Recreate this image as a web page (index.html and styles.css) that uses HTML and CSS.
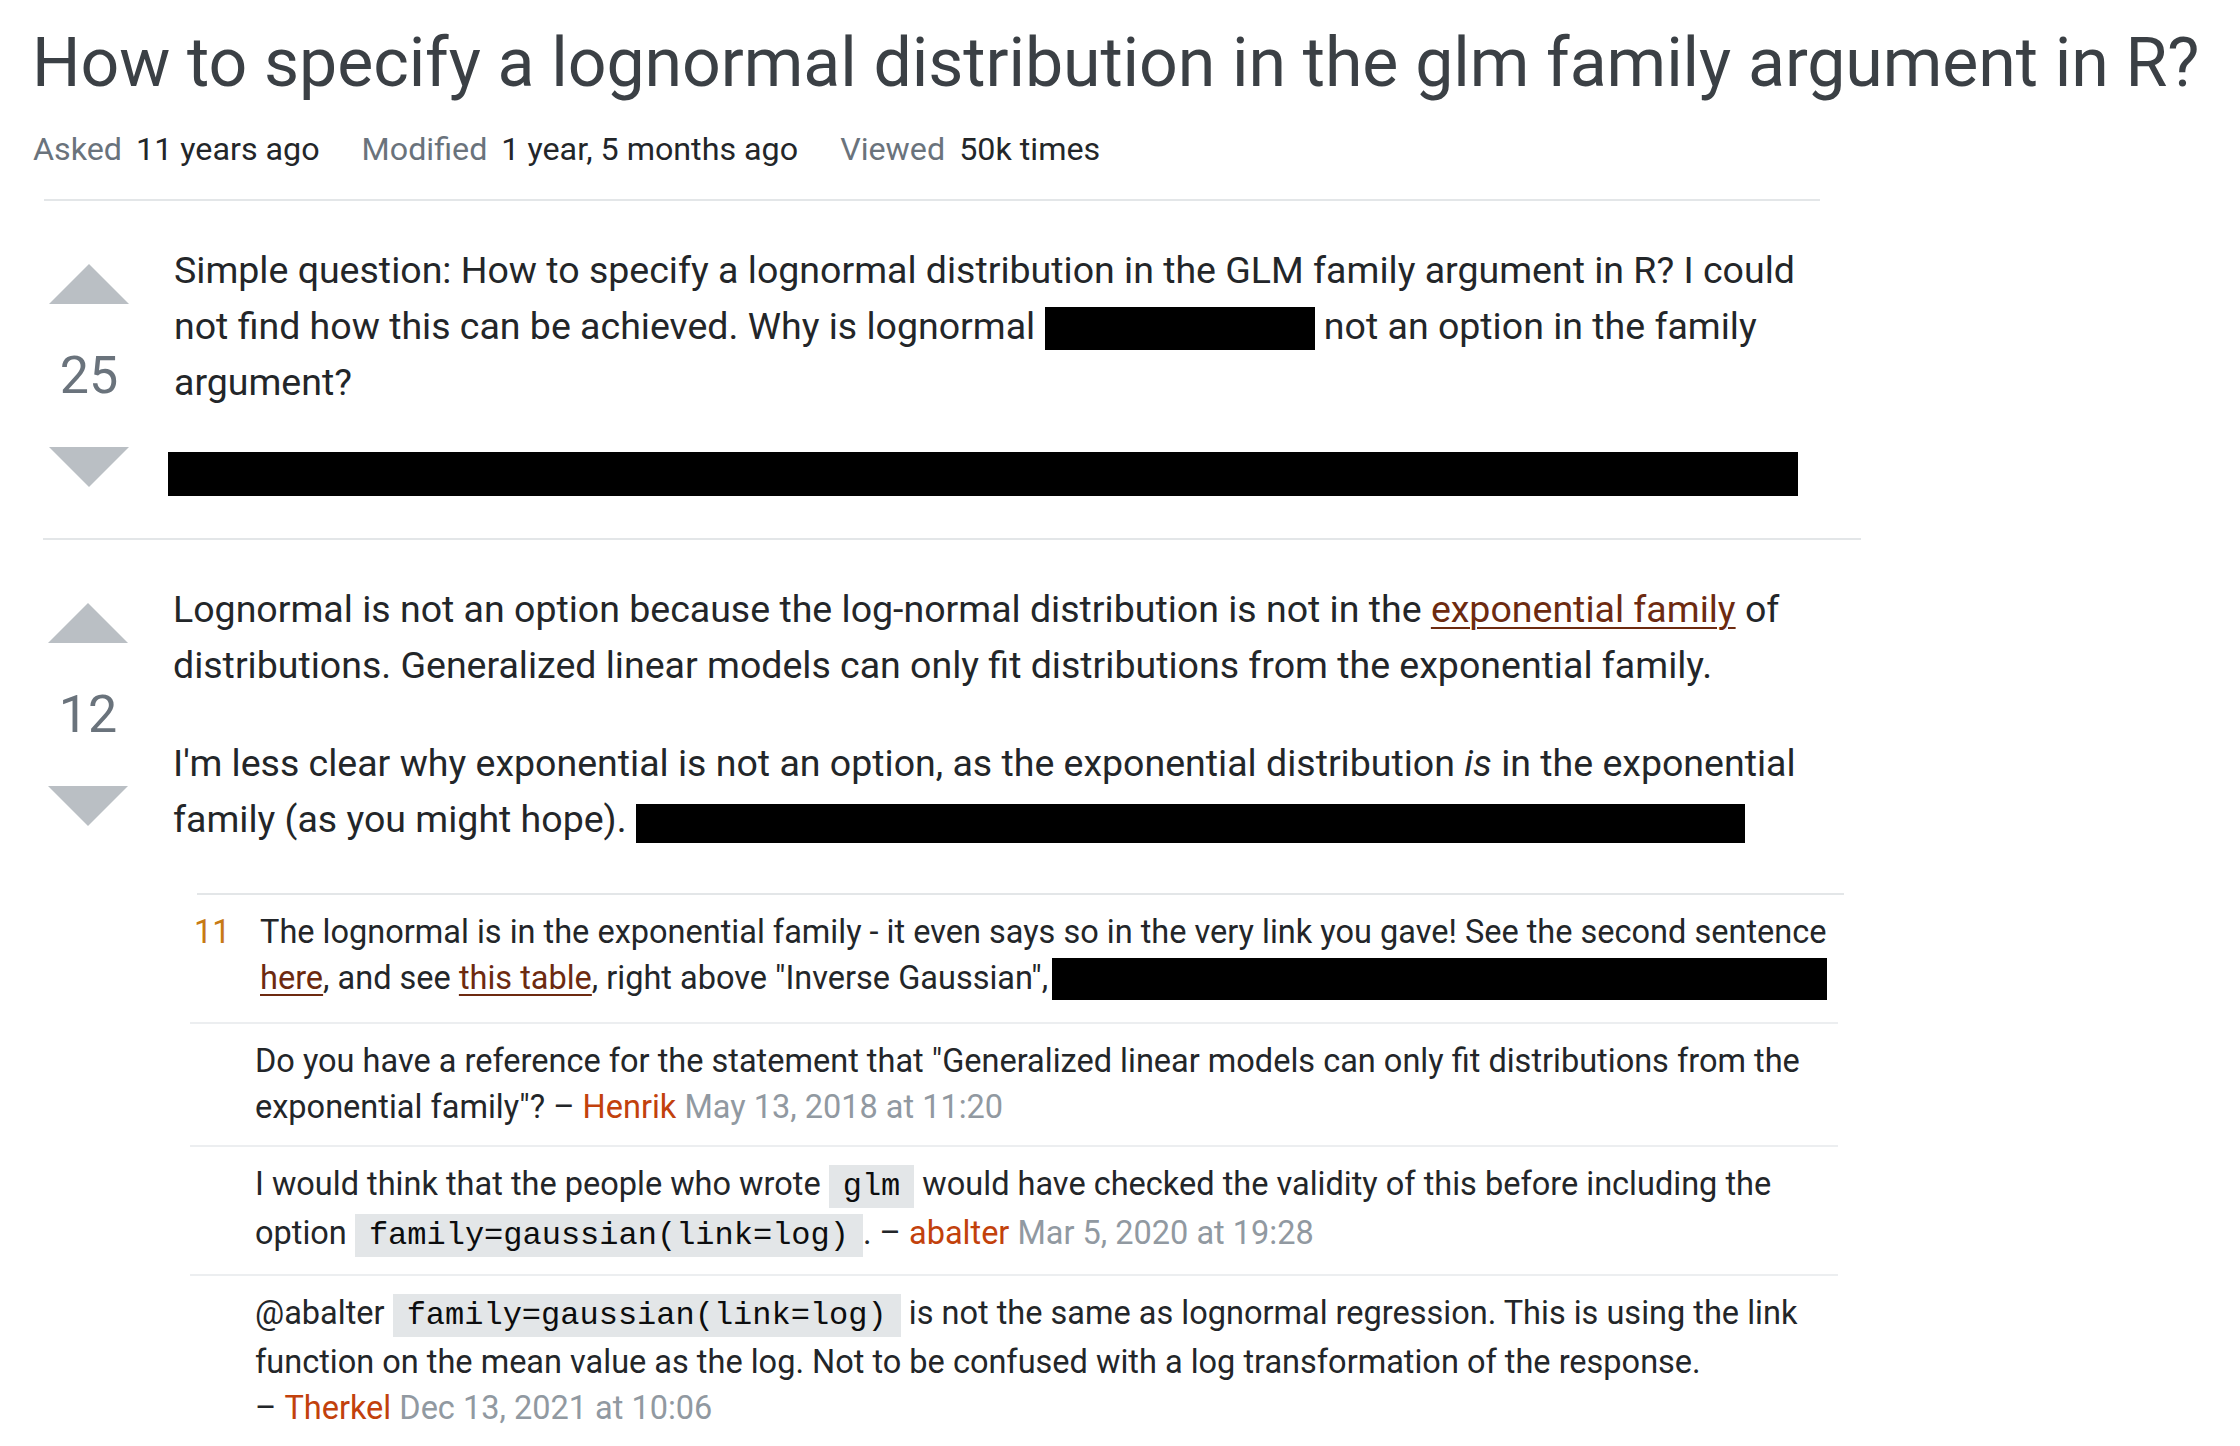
FILE: index.html
```html
<!DOCTYPE html>
<html lang="en">
<head>
<meta charset="utf-8">
<title>How to specify a lognormal distribution in the glm family argument in R?</title>
<link rel="stylesheet" href="styles.css">
</head>
<body>
<div class="page">
  <h1 class="title">How to specify a lognormal distribution in the glm family argument in R?</h1>
  <div class="meta">
    <div class="meta-item"><span class="meta-label">Asked</span><span class="meta-value">11 years ago</span></div>
    <div class="meta-item"><span class="meta-label">Modified</span><span class="meta-value">1 year, 5 months ago</span></div>
    <div class="meta-item"><span class="meta-label">Viewed</span><span class="meta-value">50k times</span></div>
  </div>

  <div class="post post--question">
    <div class="votecell">
      <svg class="vote-arrow" viewBox="0 0 80 40"><polygon points="0,40 80,40 40,0"/></svg>
      <div class="vote-count">25</div>
      <svg class="vote-arrow" viewBox="0 0 80 40"><polygon points="0,0 80,0 40,40"/></svg>
    </div>
    <div class="postcell">
      <p class="post-text">Simple question: How to specify a lognormal distribution in the GLM family argument in R? I could not find how this can be achieved. Why is lognormal <span class="redact redact--q"></span> not an option in the family argument?</p>
      <div class="redact-block"></div>
    </div>
  </div>

  <div class="post post--answer">
    <div class="votecell">
      <svg class="vote-arrow" viewBox="0 0 80 40"><polygon points="0,40 80,40 40,0"/></svg>
      <div class="vote-count">12</div>
      <svg class="vote-arrow" viewBox="0 0 80 40"><polygon points="0,0 80,0 40,40"/></svg>
    </div>
    <div class="postcell">
      <p class="post-text">Lognormal is not an option because the log-normal distribution is not in the <a class="link" href="#">exponential family</a> of distributions. Generalized linear models can only fit distributions from the exponential family.</p>
      <p class="post-text post-text--last">I'm less clear why exponential is not an option, as the exponential distribution <em>is</em> in the exponential family (as you might hope). <span class="redact redact--a"></span></p>

      <div class="comments">
        <div class="comment comment--first">
          <div class="comment-score">11</div>
          <div class="comment-body">The lognormal is in the exponential family - it even says so in the very link you gave! See the second sentence <a class="link" href="#">here</a>, and see <a class="link" href="#">this table</a>, right above "Inverse Gaussian",<span class="redact redact--c"></span></div>
        </div>
        <div class="comment">
          <div class="comment-score"></div>
          <div class="comment-body">Do you have a reference for the statement that "Generalized linear models can only fit distributions from the exponential family"? <span class="comment-sig">&ndash;&nbsp;<a class="comment-user" href="#">Henrik</a> <span class="comment-date">May 13, 2018 at 11:20</span></span></div>
        </div>
        <div class="comment">
          <div class="comment-score"></div>
          <div class="comment-body">I would think that the people who wrote <code class="code">glm</code> would have checked the validity of this before including the option <code class="code">family=gaussian(link=log)</code>. <span class="comment-sig">&ndash;&nbsp;<a class="comment-user" href="#">abalter</a> <span class="comment-date">Mar 5, 2020 at 19:28</span></span></div>
        </div>
        <div class="comment comment--last">
          <div class="comment-score"></div>
          <div class="comment-body">@abalter <code class="code">family=gaussian(link=log)</code> is not the same as lognormal regression. This is using the link function on the mean value as the log. Not to be confused with a log transformation of the response. <span class="comment-sig">&ndash;&nbsp;<a class="comment-user" href="#">Therkel</a> <span class="comment-date">Dec 13, 2021 at 10:06</span></span></div>
        </div>
      </div>
    </div>
  </div>
</div>
</body>
</html>
```
FILE: styles.css
```css
html, body {
  margin: 0;
  padding: 0;
  background: #ffffff;
}

body {
  font-family: "Roboto", "Liberation Sans", sans-serif;
  color: #232629;
}

.page {
  padding: 17px 0 0 33px;
}

.title {
  margin: 0 0 0 -1px;
  font-size: 68px;
  line-height: 92px;
  font-weight: 400;
  letter-spacing: -0.07px;
  color: #3b4045;
  white-space: nowrap;
}

.meta {
  display: flex;
  gap: 42px;
  margin-top: 16px;
  font-size: 32.25px;
  line-height: 48px;
}

.meta-item {
  display: flex;
  gap: 14px;
}

.meta-label {
  color: #6a737c;
}

.meta-value {
  color: #232629;
}

.post {
  display: grid;
  grid-template-columns: 90px minmax(0, 1fr);
  column-gap: 40px;
  padding-top: 41px;
}

.post--question {
  margin: 26px 0 0 11px;
  width: 1776px;
  border-top: 2px solid #e3e6e8;
  padding-bottom: 42px;
}

.post--answer {
  margin-left: 10px;
  width: 1818px;
  border-top: 2px solid #e3e6e8;
}

.votecell {
  display: flex;
  flex-direction: column;
  align-items: center;
  padding-top: 22px;
}

.vote-arrow {
  display: block;
  width: 80px;
  height: 40px;
  fill: #babfc4;
}

.vote-count {
  margin: 42px 0 41px;
  font-size: 52px;
  line-height: 60px;
  color: #6a737c;
  text-align: center;
}

.postcell {
  min-width: 0;
}

.post-text {
  margin: 0 0 42px;
  max-width: 1636px;
  font-size: 37.5px;
  line-height: 56px;
}

.post-text--last {
  margin-bottom: 0;
}

.post-text em {
  font-style: italic;
}

.link {
  color: #6d2a10;
  text-decoration: underline;
  text-decoration-thickness: 2px;
  text-underline-offset: 5px;
}

.redact {
  display: inline-block;
  background: #000000;
  vertical-align: -11px;
}

.redact--q {
  width: 270px;
  height: 43px;
}

.redact--a {
  width: 1109px;
  height: 39px;
}

.redact--c {
  width: 775px;
  height: 42px;
  margin-left: 4px;
}

.redact-block {
  margin: 7px 0 0 -6px;
  width: 1630px;
  height: 44px;
  background: #000000;
}

.comments {
  margin: 46px 0 0 24px;
  width: 1647px;
  border-top: 2px solid #e3e6e8;
}

.comment {
  display: grid;
  grid-template-columns: 65px minmax(0, 1fr);
  margin-left: -7px;
  width: 1648px;
  padding: 14px 0 15px;
  border-bottom: 2px solid #eceef0;
  font-size: 32.5px;
  line-height: 46px;
}

.comment--first {
  padding-bottom: 21px;
}

.comment--first .comment-body {
  padding-left: 5px;
}

.comment--last {
  border-bottom: none;
}

.comment-score {
  padding-left: 4px;
  color: #c77a14;
}

.comment-body {
  color: #232629;
}

.comment-sig {
  white-space: nowrap;
}

.comment-user {
  color: #c2410c;
  text-decoration: none;
}

.comment-date {
  color: #9199a1;
}

.code {
  font-family: "Liberation Mono", "DejaVu Sans Mono", monospace;
  font-size: 32px;
  padding: 3px 14px;
  background: #e3e6e8;
  color: #0c0d0e;
}
```
